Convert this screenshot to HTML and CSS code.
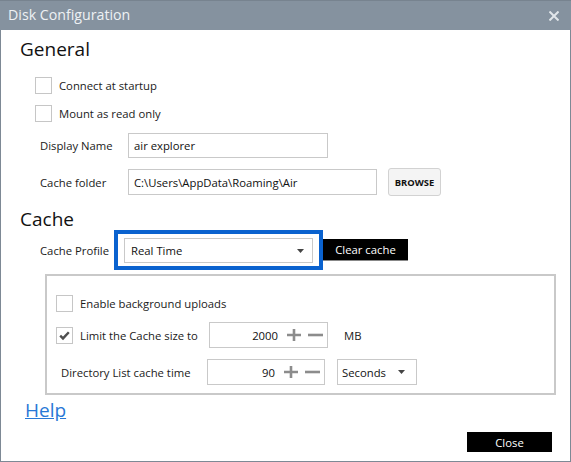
FILE: index.html
```html
<!DOCTYPE html>
<html lang="en">
<head>
<meta charset="utf-8">
<title>Disk Configuration</title>
<link rel="stylesheet" href="styles.css">
</head>
<body>
<div class="window">
  <div class="titlebar">
    <span class="title">Disk Configuration</span>
    <svg class="close-x" width="10" height="10" viewBox="0 0 10 10"><path d="M0.5 0.5 L9.5 9.5 M9.5 0.5 L0.5 9.5" stroke="#e1e6ea" stroke-width="2" fill="none"/></svg>
  </div>
  <div class="content">
    <h2 class="heading heading-general">General</h2>
    <label class="check-row row-connect"><span class="box"></span><span>Connect at startup</span></label>
    <label class="check-row row-mount"><span class="box"></span><span>Mount as read only</span></label>
    <div class="field-row row-name">
      <span class="field-label">Display Name</span>
      <div class="input input-name">air explorer</div>
    </div>
    <div class="field-row row-folder">
      <span class="field-label">Cache folder</span>
      <div class="input input-folder">C:\Users\AppData\Roaming\Air</div>
      <button class="browse">BROWSE</button>
    </div>
    <h2 class="heading heading-cache">Cache</h2>
    <div class="field-row row-profile">
      <span class="field-label label-profile">Cache Profile</span>
      <div class="focus-ring">
        <div class="select select-profile">
          <span class="select-text">Real Time</span>
          <svg class="arrow" width="7" height="4" viewBox="0 0 7 4"><path d="M0 0 H7 L3.5 4 Z" fill="#444"/></svg>
        </div>
      </div>
      <button class="btn-black btn-clear">Clear cache</button>
    </div>
    <div class="group">
      <label class="check-row g-row1"><span class="box"></span><span>Enable background uploads</span></label>
      <div class="g-row g-row2">
        <span class="box checked"><svg width="15" height="15" viewBox="0 0 15 15"><path d="M3.2 7.6 L6 10.4 L11.8 4.2" stroke="#4f4f4f" stroke-width="2.4" fill="none"/></svg></span>
        <span class="limit-label">Limit the Cache size to</span>
        <div class="num num-size">
          <span class="num-val">2000</span>
          <svg class="plus" width="14" height="14" viewBox="0 0 14 14"><path d="M7 1 V13 M0 7 H14" stroke="#8c8c8c" stroke-width="2.6"/></svg>
          <svg class="minus" width="15" height="14" viewBox="0 0 15 14"><path d="M0 7 H15" stroke="#8c8c8c" stroke-width="2.6"/></svg>
        </div>
        <span class="unit">MB</span>
      </div>
      <div class="g-row g-row3">
        <span class="dir-label">Directory List cache time</span>
        <div class="num num-time">
          <span class="num-val">90</span>
          <svg class="plus" width="14" height="14" viewBox="0 0 14 14"><path d="M7 1 V13 M0 7 H14" stroke="#8c8c8c" stroke-width="2.6"/></svg>
          <svg class="minus" width="15" height="14" viewBox="0 0 15 14"><path d="M0 7 H15" stroke="#8c8c8c" stroke-width="2.6"/></svg>
        </div>
        <div class="select select-unit">
          <span class="select-text">Seconds</span>
          <svg class="arrow" width="7" height="4" viewBox="0 0 7 4"><path d="M0 0 H7 L3.5 4 Z" fill="#444"/></svg>
        </div>
      </div>
    </div>
    <a class="help" href="#">Help</a>
    <div class="footer">
      <button class="btn-black btn-close">Close</button>
    </div>
  </div>
</div>
</body>
</html>
```
FILE: styles.css
```css
* { box-sizing: border-box; }
html, body { margin: 0; padding: 0; background: #fff; }
body {
  font-family: "Open Sans", "Noto Sans", sans-serif;
  font-size: 11.3px;
  color: #1a1a1a;
}
.window {
  width: 571px;
  height: 462px;
  display: flex;
  flex-direction: column;
}
.titlebar {
  height: 30px;
  flex: 0 0 30px;
  background: #85929f;
  border-top: 1px solid #77838f;
  display: flex;
  align-items: center;
  justify-content: space-between;
  padding: 0 12px 0 8px;
}
.title {
  color: #eef1f4;
  font-size: 14.2px;
  line-height: 1;
}
.close-x { display: block; }
.content {
  flex: 1;
  border: 1px solid #7d8995;
  border-top: none;
  padding: 0 18px 9px 19px;
  display: flex;
  flex-direction: column;
}
.heading {
  margin: 0;
  font-weight: normal;
  font-size: 19px;
  line-height: 22px;
  color: #111;
}
.heading-general { margin-top: 8px; }
.heading-cache { margin-top: 12px; }
.check-row {
  display: flex;
  align-items: center;
  height: 17px;
}
.box {
  width: 17px;
  height: 17px;
  flex: 0 0 17px;
  border: 1px solid #c6c6c6;
  background: #fff;
  margin-right: 7px;
  display: flex;
  align-items: center;
  justify-content: center;
}
.box svg { display: block; }
.row-connect { margin-top: 17px; margin-left: 15px; }
.row-mount { margin-top: 11px; margin-left: 15px; }
.field-row {
  display: flex;
  align-items: center;
  margin-left: 20px;
}
.field-label { width: 88px; flex: 0 0 88px; }
.row-name { margin-top: 11px; height: 25px; }
.row-folder { margin-top: 10px; height: 28px; }
.input {
  border: 1px solid #c9c9c9;
  background: #fff;
  display: flex;
  align-items: center;
  padding-left: 5px;
  color: #111;
}
.input-name { width: 200px; height: 25px; }
.input-folder { width: 249px; height: 26px; }
.browse {
  margin-left: 11px;
  width: 53px;
  height: 28px;
  border: 1px solid #d2d2d2;
  border-radius: 3px;
  background: #f4f4f4;
  font-family: inherit;
  font-weight: bold;
  font-size: 9.4px;
  color: #111;
  padding: 0;
}
.row-profile { height: 40px; }
.label-profile { width: 74px; flex: 0 0 74px; }
.focus-ring {
  width: 209px;
  height: 40px;
  border: 4px solid #0a62cf;
  padding: 4px 6px 3px 6px;
}
.select {
  border: 1px solid #c9c9c9;
  background: #fff;
  display: flex;
  align-items: center;
  justify-content: space-between;
  color: #111;
}
.select-profile {
  height: 25px;
  padding: 0 8px 0 6px;
}
.arrow { display: block; }
.btn-black {
  background: #000;
  color: #fff;
  border: none;
  font-family: inherit;
  font-size: 11.3px;
  padding: 0;
  display: flex;
  align-items: center;
  justify-content: center;
}
.btn-clear {
  width: 85px;
  height: 22px;
  border-bottom: 1px solid #888;
}
.group {
  margin-top: 4px;
  margin-left: 25px;
  width: 511px;
  border: 2px solid #c9c9c9;
  padding: 19px 0 8px 9px;
}
.g-row {
  display: flex;
  align-items: center;
  height: 26px;
}
.g-row2 { margin-top: 10px; }
.g-row3 { margin-top: 11px; }
.limit-label { width: 129px; flex: 0 0 129px; }
.num {
  border: 1px solid #c9c9c9;
  height: 26px;
  display: flex;
  align-items: center;
  padding-right: 4px;
  color: #111;
}
.num-size { width: 119px; }
.num-time { width: 118px; }
.num-val { flex: 1; text-align: right; }
.plus { display: block; margin-left: 9px; }
.minus { display: block; margin-left: 7px; }
.unit { margin-left: 16px; }
.dir-label { margin-left: 5px; width: 146px; flex: 0 0 146px; }
.select-unit {
  margin-left: 12px;
  width: 80px;
  height: 26px;
  padding: 0 11px 0 4px;
}
.help {
  align-self: flex-start;
  margin-top: 4px;
  margin-left: 5px;
  font-size: 19px;
  line-height: 22px;
  color: #2878d6;
  text-decoration: underline;
}
.footer {
  margin-top: auto;
  display: flex;
  justify-content: flex-end;
}
.btn-close { width: 85px; height: 20px; }
```
